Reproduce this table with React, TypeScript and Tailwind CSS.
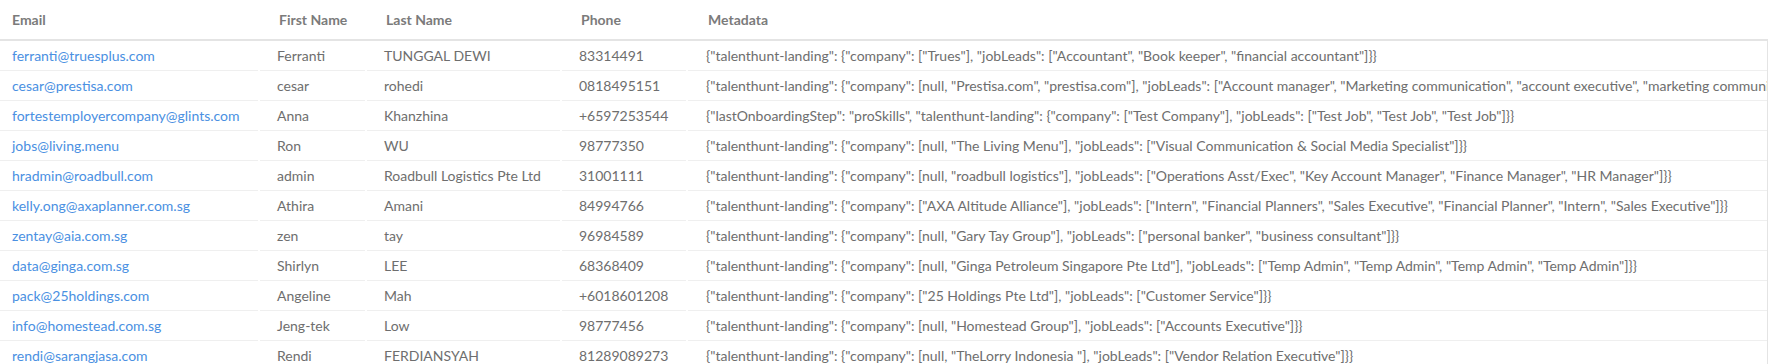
const rows = [
  {
    email: "ferranti@truesplus.com",
    first: "Ferranti",
    last: "TUNGGAL DEWI",
    phone: "83314491",
    meta: '{"talenthunt-landing": {"company": ["Trues"], "jobLeads": ["Accountant", "Book keeper", "financial accountant"]}}',
  },
  {
    email: "cesar@prestisa.com",
    first: "cesar",
    last: "rohedi",
    phone: "0818495151",
    meta: '{"talenthunt-landing": {"company": [null, "Prestisa.com", "prestisa.com"], "jobLeads": ["Account manager", "Marketing communication", "account executive", "marketing communication"]}}',
  },
  {
    email: "fortestemployercompany@glints.com",
    first: "Anna",
    last: "Khanzhina",
    phone: "+6597253544",
    meta: '{"lastOnboardingStep": "proSkills", "talenthunt-landing": {"company": ["Test Company"], "jobLeads": ["Test Job", "Test Job", "Test Job"]}}',
  },
  {
    email: "jobs@living.menu",
    first: "Ron",
    last: "WU",
    phone: "98777350",
    meta: '{"talenthunt-landing": {"company": [null, "The Living Menu"], "jobLeads": ["Visual Communication & Social Media Specialist"]}}',
  },
  {
    email: "hradmin@roadbull.com",
    first: "admin",
    last: "Roadbull Logistics Pte Ltd",
    phone: "31001111",
    meta: '{"talenthunt-landing": {"company": [null, "roadbull logistics"], "jobLeads": ["Operations Asst/Exec", "Key Account Manager", "Finance Manager", "HR Manager"]}}',
  },
  {
    email: "kelly.ong@axaplanner.com.sg",
    first: "Athira",
    last: "Amani",
    phone: "84994766",
    meta: '{"talenthunt-landing": {"company": ["AXA Altitude Alliance"], "jobLeads": ["Intern", "Financial Planners", "Sales Executive", "Financial Planner", "Intern", "Sales Executive"]}}',
  },
  {
    email: "zentay@aia.com.sg",
    first: "zen",
    last: "tay",
    phone: "96984589",
    meta: '{"talenthunt-landing": {"company": [null, "Gary Tay Group"], "jobLeads": ["personal banker", "business consultant"]}}',
  },
  {
    email: "data@ginga.com.sg",
    first: "Shirlyn",
    last: "LEE",
    phone: "68368409",
    meta: '{"talenthunt-landing": {"company": [null, "Ginga Petroleum Singapore Pte Ltd"], "jobLeads": ["Temp Admin", "Temp Admin", "Temp Admin", "Temp Admin"]}}',
  },
  {
    email: "pack@25holdings.com",
    first: "Angeline",
    last: "Mah",
    phone: "+6018601208",
    meta: '{"talenthunt-landing": {"company": ["25 Holdings Pte Ltd"], "jobLeads": ["Customer Service"]}}',
  },
  {
    email: "info@homestead.com.sg",
    first: "Jeng-tek",
    last: "Low",
    phone: "98777456",
    meta: '{"talenthunt-landing": {"company": [null, "Homestead Group"], "jobLeads": ["Accounts Executive"]}}',
  },
  {
    email: "rendi@sarangjasa.com",
    first: "Rendi",
    last: "FERDIANSYAH",
    phone: "81289089273",
    meta: '{"talenthunt-landing": {"company": [null, "TheLorry Indonesia "], "jobLeads": ["Vendor Relation Executive"]}}',
  },
];

export default function App() {
  return (
    <div className="w-[1768px] h-[364px] overflow-hidden bg-white font-['Lato',sans-serif] text-[14px]">
      {/* Header */}
      <div className="flex h-[41px] items-center border-b-2 border-[#e4e4e4] font-bold text-[#7b7b7b]">
        <div className="w-[260px] pl-[12px]">Email</div>
        <div className="w-[107px] pl-[19px]">First Name</div>
        <div className="w-[195px] pl-[19px]">Last Name</div>
        <div className="w-[126px] pl-[19px]">Phone</div>
        <div className="flex-1 pl-[20px]">Metadata</div>
      </div>

      {/* Rows */}
      <div className="border-r border-[#e4e4e4]">
        {rows.map((r) => (
          <div key={r.email} className="flex h-[30px] gap-[2px] text-[#6e6e6e]">
            <div className="w-[258px] shrink-0 border-b border-[#efefef] pl-[12px] leading-[30px]">
              <a href="#" className="text-[#4a90e2]">
                {r.email}
              </a>
            </div>
            <div className="w-[105px] shrink-0 border-b border-[#efefef] pl-[17px] leading-[30px]">{r.first}</div>
            <div className="w-[193px] shrink-0 border-b border-[#efefef] pl-[17px] leading-[30px]">{r.last}</div>
            <div className="w-[124px] shrink-0 border-b border-[#efefef] pl-[17px] leading-[30px]">{r.phone}</div>
            <div className="min-w-0 flex-1 overflow-hidden whitespace-nowrap border-b border-[#efefef] pl-[18px] leading-[30px]">
              {r.meta}
            </div>
          </div>
        ))}
      </div>
    </div>
  );
}
